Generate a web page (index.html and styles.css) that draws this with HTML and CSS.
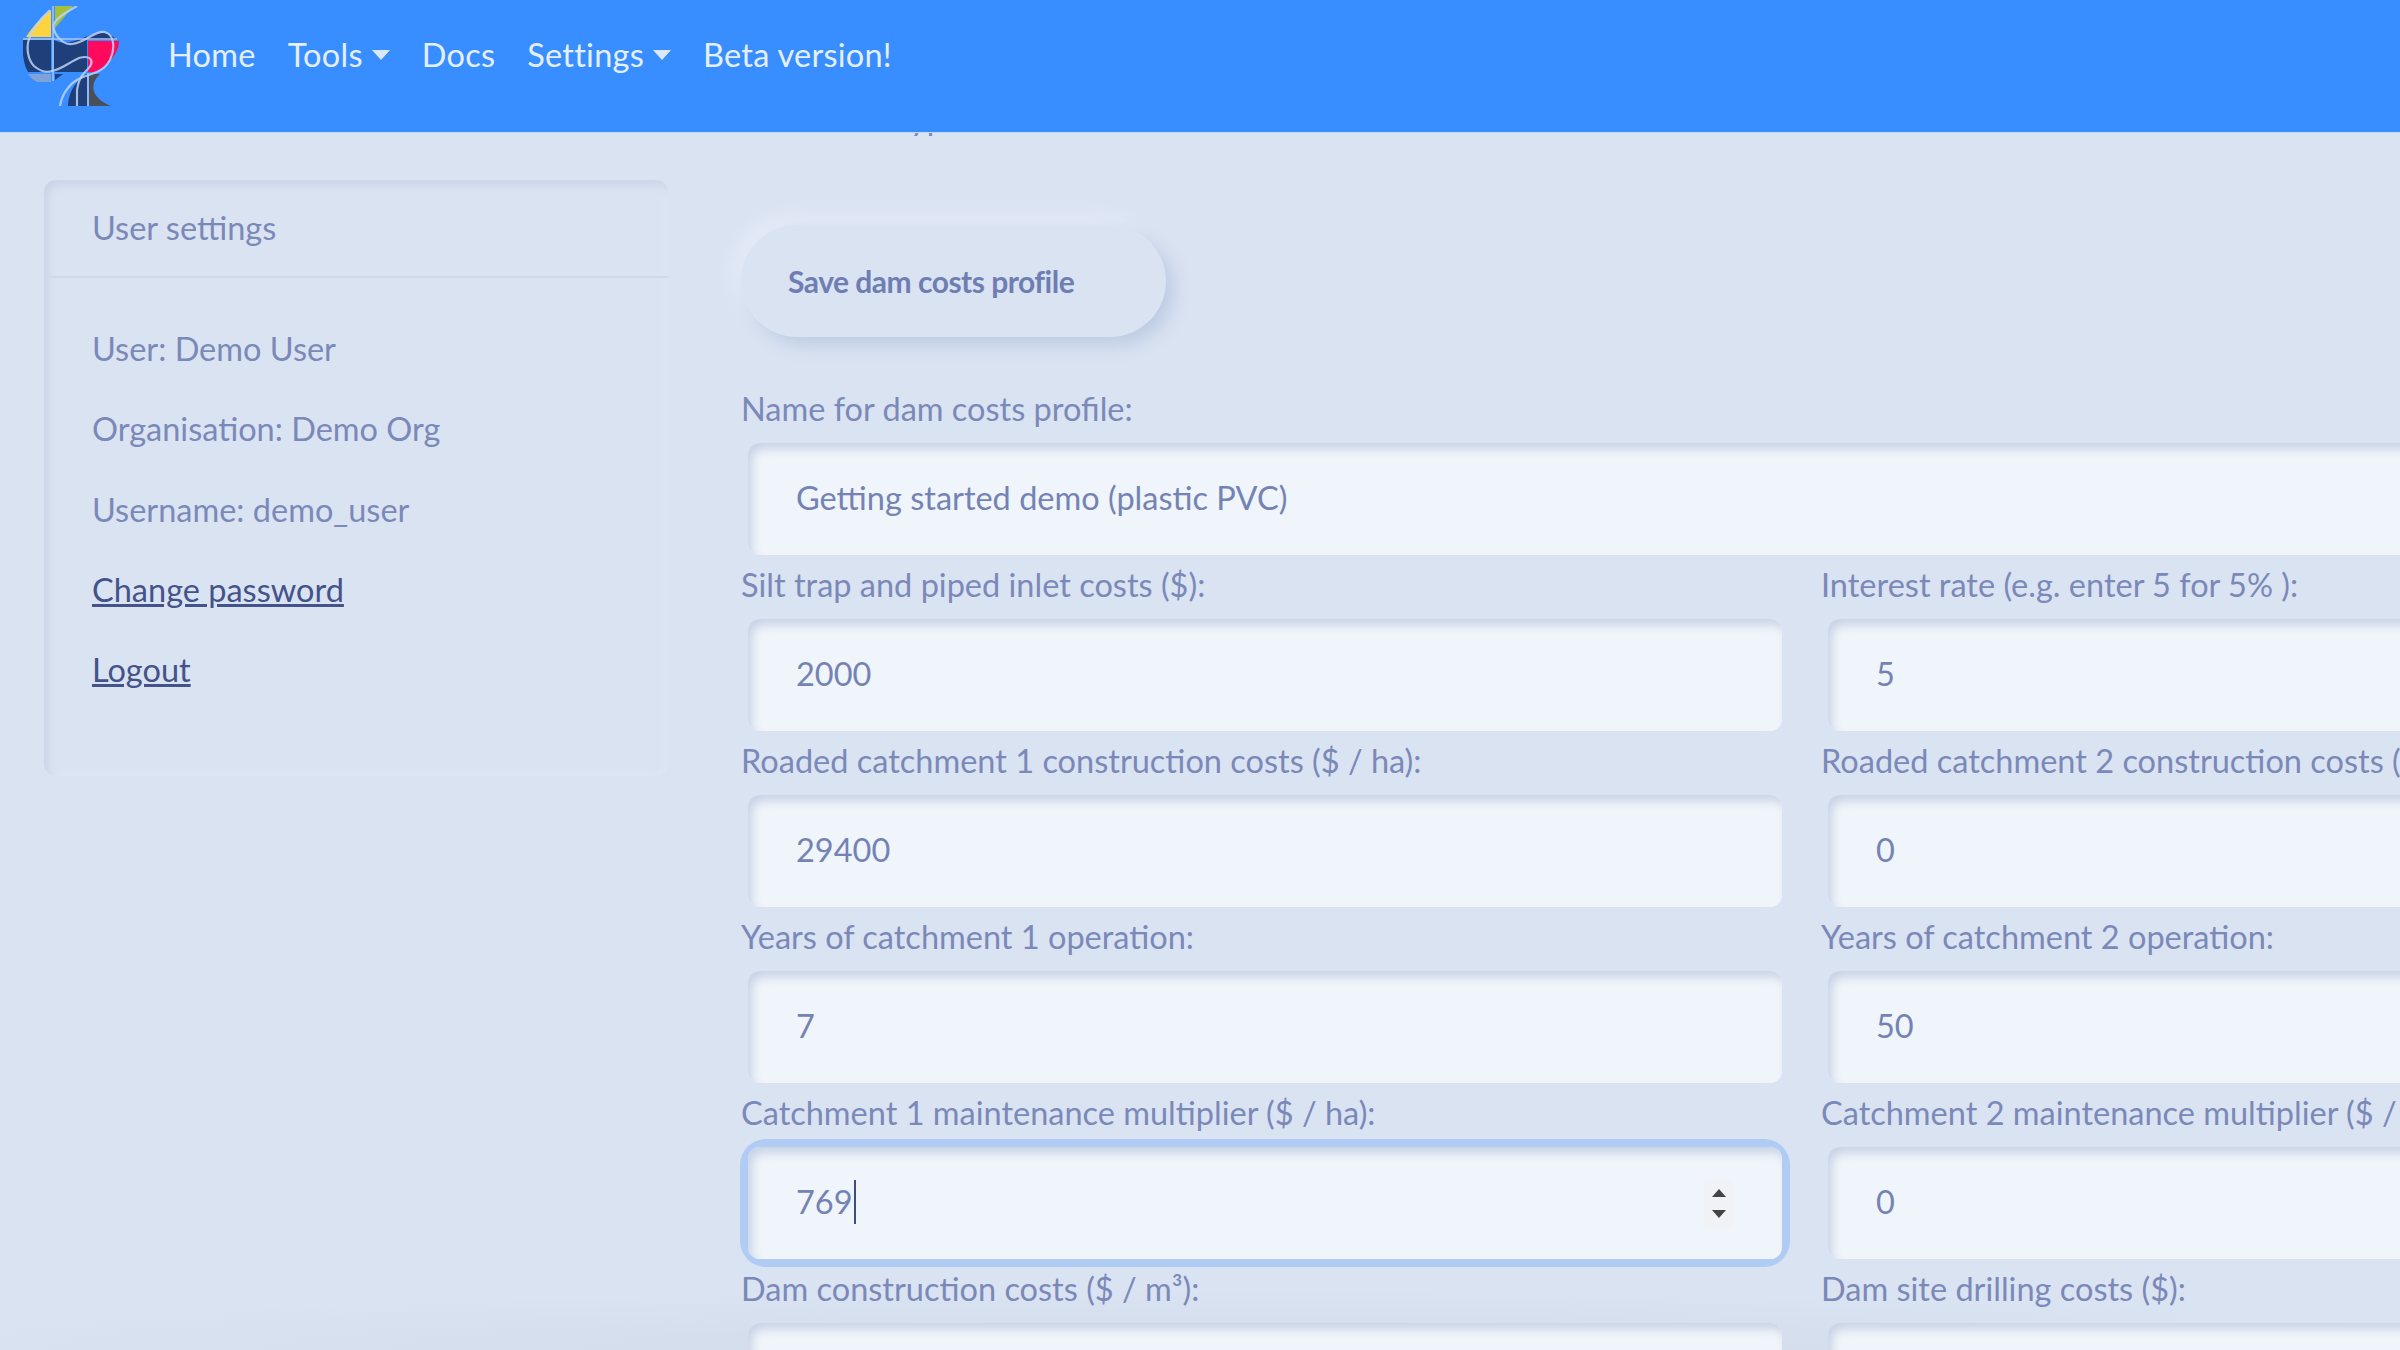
FILE: index.html
```html
<!DOCTYPE html>
<html lang="en">
<head>
<meta charset="utf-8">
<title>Dam costs profile</title>
<link rel="stylesheet" href="styles.css">
</head>
<body>
<header class="navbar">
  <svg class="logo" viewBox="0 0 96 100" aria-label="Logo">
    <path fill="#fdd33f" d="M3 31C10 20 18 12 28 4V31Z"/>
    <path fill="#a4c03d" d="M32 0H50C44 8 38 15 32 22Z"/>
    <path fill="#1f3f7a" d="M0 34H28V66H5C0 58-1 44 0 34Z"/>
    <path fill="#1f3f7a" d="M31 34C38 38 48 38 64 30V66H31Z"/>
    <path fill="#1f3f7a" d="M62 32C72 26 84 24 94 34H62Z"/>
    <path fill="#ff0a5c" d="M65 35H96C96 48 84 60 72 66H65Z"/>
    <path fill="#7fa3d8" d="M5 68H28V76H14C10 74 7 71 5 68Z"/>
    <path fill="#1f3f7a" d="M32 68H40L32 74Z"/>
    <path fill="#1f3f7a" d="M45 100C45 90 50 76 64 68V100Z"/>
    <path fill="#4a4f5c" d="M66 68H77C66 78 68 92 88 100H66Z"/>
    <path fill="none" stroke="#a6c6f5" stroke-width="1.5" d="M30 0V75M0 33H94M65 67V100"/>
    <path fill="none" stroke="#bcd3f7" stroke-opacity=".85" stroke-width="2.2" d="M54 0C44 6 34 11 31 18C29 26 38 39 49 38C62 37 72 24 82 26C92 29 92 44 87 54C83 61 80 63 74 66C64 70 52 72 45 82C40 88 38 94 37 100"/>
    <path fill="none" stroke="#bcd3f7" stroke-opacity=".85" stroke-width="2.2" d="M27 4C16 14 9 24 6 33C3 42 5 54 11 60C17 65 23 67 29 65C38 63 44 58 52 54C58 50 66 50 68 54C70 58 66 62 62 66C58 70 55 76 54 84C54 90 54 95 54 100"/>
  </svg>
  <nav class="nav-links">
    <a class="nav-link" href="#">Home</a>
    <a class="nav-link has-caret" href="#">Tools</a>
    <a class="nav-link" href="#">Docs</a>
    <a class="nav-link has-caret" href="#">Settings</a>
    <a class="nav-link" href="#">Beta version!</a>
  </nav>
</header>
<main class="page">
  <aside class="card">
    <div class="card-header">User settings</div>
    <div class="card-body">
      <p>User: Demo User</p>
      <p>Organisation: Demo Org</p>
      <p>Username: demo_user</p>
      <p><a href="#">Change password</a></p>
      <p><a href="#">Logout</a></p>
    </div>
  </aside>
  <section class="content">
    <p class="scrolled-line">Dam costs types</p>
    <button class="btn" type="button">Save dam costs profile</button>
    <form class="form">
      <div class="field field-wide">
        <label for="f-name">Name for dam costs profile:</label>
        <input id="f-name" type="text" value="Getting started demo (plastic PVC)">
      </div>
      <div class="field">
        <label for="f1">Silt trap and piped inlet costs ($):</label>
        <input id="f1" type="text" value="2000">
      </div>
      <div class="field">
        <label for="f2">Interest rate (e.g. enter 5 for 5% ):</label>
        <input id="f2" type="text" value="5">
      </div>
      <div class="field">
        <label for="f3">Roaded catchment 1 construction costs ($ / ha):</label>
        <input id="f3" type="text" value="29400">
      </div>
      <div class="field">
        <label for="f4">Roaded catchment 2 construction costs ($ / ha):</label>
        <input id="f4" type="text" value="0">
      </div>
      <div class="field">
        <label for="f5">Years of catchment 1 operation:</label>
        <input id="f5" type="text" value="7">
      </div>
      <div class="field">
        <label for="f6">Years of catchment 2 operation:</label>
        <input id="f6" type="text" value="50">
      </div>
      <div class="field">
        <label for="f7">Catchment 1 maintenance multiplier ($ / ha):</label>
        <div class="focused">
          <input id="f7" type="text" value="769">
          <span class="text-caret"></span>
          <span class="spinner"><i class="up"></i><i class="down"></i></span>
        </div>
      </div>
      <div class="field">
        <label for="f8">Catchment 2 maintenance multiplier ($ / ha):</label>
        <input id="f8" type="text" value="0">
      </div>
      <div class="field">
        <label for="f9">Dam construction costs ($ / m³):</label>
        <input id="f9" type="text" value="">
      </div>
      <div class="field">
        <label for="f10">Dam site drilling costs ($):</label>
        <input id="f10" type="text" value="">
      </div>
    </form>
  </section>
</main>
</body>
</html>
```
FILE: styles.css
```css
* { box-sizing: border-box; }
html, body { margin: 0; height: 100%; overflow: hidden; }
body {
  display: flex;
  flex-direction: column;
  width: 2400px;
  height: 1350px;
  font-family: Lato, "Noto Sans", sans-serif;
  font-size: 32.5px;
  line-height: 36px;
  color: #7b89b9;
  background: radial-gradient(ellipse 1400px 60px at 50% 100%, #d0dbea, rgba(218,227,242,0)), #dae3f2;
}
.navbar {
  position: relative;
  z-index: 2;
  flex: none;
  height: 132px;
  display: flex;
  align-items: flex-start;
  padding: 6px 0 0 23px;
  background: #388dff;
  box-shadow: 0 1px 0 #c4d8f5;
}
.logo { flex: none; width: 96px; height: 100px; }
.nav-links {
  display: flex;
  gap: 32px;
  margin: 31px 0 0 49px;
  letter-spacing: .25px;
}
.nav-link {
  color: #e4efff;
  text-decoration: none;
}
.has-caret::after {
  content: "";
  display: inline-block;
  margin-left: 9px;
  vertical-align: 7px;
  border-top: 10px solid #dbe8fc;
  border-left: 9px solid transparent;
  border-right: 9px solid transparent;
}
.page {
  flex: 1;
  min-height: 0;
  display: flex;
  align-items: flex-start;
  padding-left: 44px;
}
.card {
  flex: none;
  width: 624px;
  height: 596px;
  margin-top: 48px;
  border-radius: 12px;
  box-shadow: inset 4px 5px 9px #c9d4e7, inset -2px -2px 6px #e0e8f5;
}
.card-header {
  height: 98px;
  padding: 0 48px;
  display: flex;
  align-items: center;
  border-bottom: 2px solid #cfd9ea;
}
.card-body { padding: 53px 48px 0; }
.card-body p { margin: 0 0 44.3px; }
.card-body a { color: #44538a; }
.content {
  flex: none;
  width: 2160px;
  margin: -32px 0 0 73px;
}
.scrolled-line { margin: 0; white-space: nowrap; }
.btn {
  display: block;
  width: 425px;
  height: 112px;
  margin: 89px 0 54px;
  padding: 0 0 0 47px;
  border: 0;
  border-radius: 56px;
  text-align: left;
  font: 700 30px/36px Lato, "Noto Sans", sans-serif;
  letter-spacing: -.5px;
  color: #6f7eb2;
  background: #d9e3f2;
  box-shadow: 8px 8px 18px #bccbe3, -8px -8px 18px #e6ecf8;
}
.form {
  display: grid;
  grid-template-columns: 1080px 1080px;
}
.field { padding-top: 12px; }
.form .field-wide { grid-column: 1 / -1; padding-top: 0; }
.field label {
  display: block;
  margin-bottom: 16px;
  white-space: nowrap;
}
.field input {
  display: block;
  width: 1034px;
  height: 112px;
  margin-left: 7px;
  padding: 0 48px 4px;
  border: 0;
  outline: 0;
  border-radius: 12px;
  font: 400 32.5px/36px Lato, "Noto Sans", sans-serif;
  color: #7483b4;
  background: #eff5fa;
  box-shadow: inset 4px 6px 10px #c8d3e6, inset -2px -2px 6px #f4f7fb;
}
.field-wide input { width: 2000px; }
.focused {
  position: relative;
  width: 1034px;
  margin-left: 7px;
  border-radius: 18px;
  box-shadow: 0 0 0 8px #b0ccf4;
}
.field .focused input { margin-left: 0; width: 1034px; }
.text-caret {
  position: absolute;
  top: 33px;
  left: 106px;
  width: 2px;
  height: 44px;
  background: #3f4d85;
}
.spinner {
  position: absolute;
  top: 33px;
  right: 49px;
  width: 29px;
  height: 47px;
  display: flex;
  flex-direction: column;
  align-items: center;
  justify-content: space-between;
  padding: 9px 0;
  background: #f0f2f6;
}
.spinner i { width: 0; height: 0; border-left: 7px solid transparent; border-right: 7px solid transparent; }
.spinner .up { border-bottom: 8px solid #444; }
.spinner .down { border-top: 8px solid #444; }
```
